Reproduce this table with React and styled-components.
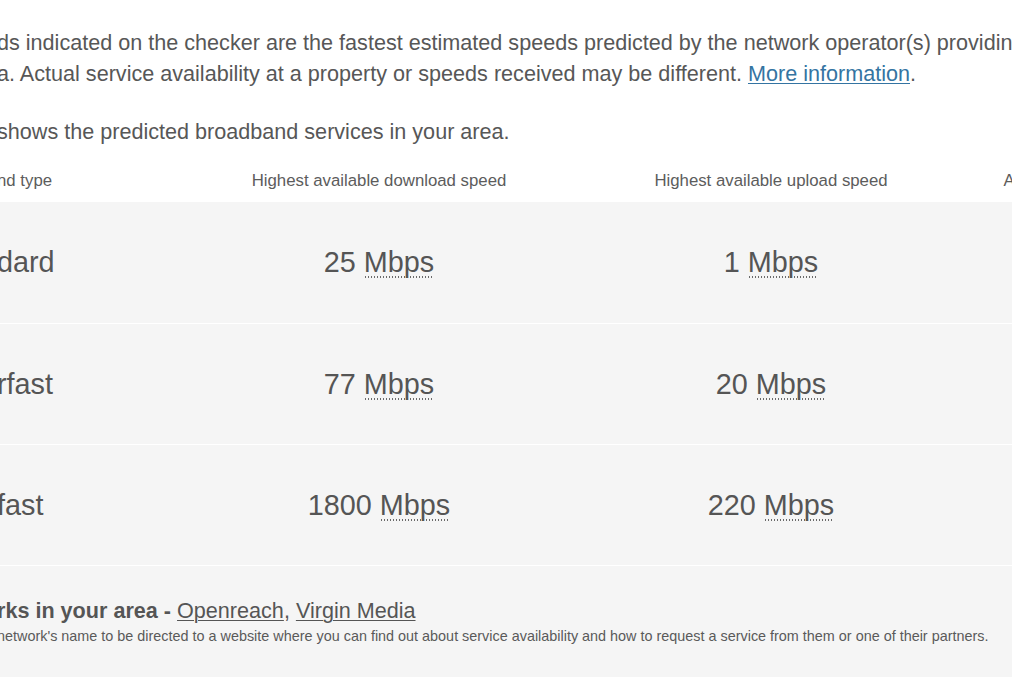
import styled, { createGlobalStyle } from 'styled-components'

const rows = [
	{ type: 'dard', down: '25', up: '1' },
	{ type: 'rfast', down: '77', up: '20' },
	{ type: 'fast', down: '1800', up: '220' },
]

function App() {
	return (
		<>
			<GlobalStyle />
			<Page>
				<Content>
					<IntroGroup>
						<Intro>
							<Line>
								ds indicated on the checker are the fastest estimated speeds
								predicted by the network operator(s) providing
							</Line>
							<Line>
								a. Actual service availability at a property or speeds
								received may be different.{' '}
								<Link href='#'>More information</Link>.
							</Line>
						</Intro>
						<Intro>
							<Line>shows the predicted broadband services in your area.</Line>
						</Intro>
					</IntroGroup>

					<Table>
						<HeaderRow>
							<HeaderCell align='left'>nd type</HeaderCell>
							<HeaderCell>Highest available download speed</HeaderCell>
							<HeaderCell>Highest available upload speed</HeaderCell>
							<HeaderCell>Availability</HeaderCell>
						</HeaderRow>
						{rows.map((row) => (
							<Row key={row.type}>
								<Cell align='left'>{row.type}</Cell>
								<Cell>
									{row.down} <Unit title='Megabits per second'>Mbps</Unit>
								</Cell>
								<Cell>
									{row.up} <Unit title='Megabits per second'>Mbps</Unit>
								</Cell>
								<Cell />
							</Row>
						))}
					</Table>

					<Networks>
						<NetworksTitle>
							<strong>rks in your area - </strong>
							<NetworkLink href='#'>Openreach</NetworkLink>,{' '}
							<NetworkLink href='#'>Virgin Media</NetworkLink>
						</NetworksTitle>
						<NetworksNote>
							network's name to be directed to a website where you can find out
							about service availability and how to request a service from them
							or one of their partners.
						</NetworksNote>
					</Networks>
				</Content>
			</Page>
		</>
	)
}

export default App

const GlobalStyle = createGlobalStyle`
	html, body {
		margin: 0;
		padding: 0;
		overflow: hidden;
		background: #fff;
	}
	body {
		font-family: "Liberation Sans", Arial, sans-serif;
		color: #575757;
	}
`

const Page = styled.div`
	width: 1012px;
	height: 700px;
	overflow: hidden;
`

const Content = styled.div`
	display: flex;
	flex-direction: column;
	margin-left: -3px;
	padding-top: 27px;
`

const IntroGroup = styled.div`
	display: flex;
	flex-direction: column;
	gap: 27px;
`

const Intro = styled.p`
	margin: 0;
	font-size: 21.6px;
	line-height: 31px;
`

const Line = styled.span`
	display: block;
	white-space: nowrap;
`

const Link = styled.a`
	color: #3474a2;
	text-decoration: underline;
	text-underline-offset: 2px;
	text-decoration-thickness: 1px;
`

const Table = styled.div`
	display: flex;
	flex-direction: column;
	gap: 1px;
	margin-top: 14px;
`

const grid = `
	display: grid;
	grid-template-columns: 186px 392px 392px 152px;
	width: 1122px;
`

const HeaderRow = styled.div`
	${grid}
	height: 40px;
	align-items: start;
	padding-top: 10px;
	box-sizing: border-box;
	background: #fff;
`

const HeaderCell = styled.div`
	font-size: 16.8px;
	line-height: 20px;
	color: #5c5c5c;
	white-space: nowrap;
	text-align: ${(props) => props.align || 'center'};
`

const Row = styled.div`
	${grid}
	height: 120px;
	box-sizing: border-box;
	padding-bottom: 1px;
	align-items: center;
	background: #f5f5f5;

	&:nth-child(2) {
		height: 121px;
	}
`

const Cell = styled.div`
	font-size: 28.8px;
	line-height: 34px;
	color: #555;
	white-space: nowrap;
	text-align: ${(props) => props.align || 'center'};
`

const Unit = styled.abbr`
	text-decoration: none;
	background-image: radial-gradient(circle, #6a6a6a 0.8px, transparent 1.1px);
	background-size: 3px 2px;
	background-repeat: repeat-x;
	background-position: left bottom;
`

const Networks = styled.div`
	margin-top: 1px;
	height: 111px;
	box-sizing: border-box;
	padding-top: 33px;
	background: #f5f5f5;
	width: 1030px;
`

const NetworksTitle = styled.div`
	font-size: 21.6px;
	line-height: 24px;
	color: #555;
	white-space: nowrap;

	strong {
		font-weight: bold;
	}
`

const NetworkLink = styled.a`
	color: #555;
	text-decoration: underline;
	text-underline-offset: 2px;
	text-decoration-thickness: 1px;
`

const NetworksNote = styled.div`
	margin-top: 5px;
	font-size: 14.4px;
	line-height: 17px;
	color: #5a5a5a;
	white-space: nowrap;
`
